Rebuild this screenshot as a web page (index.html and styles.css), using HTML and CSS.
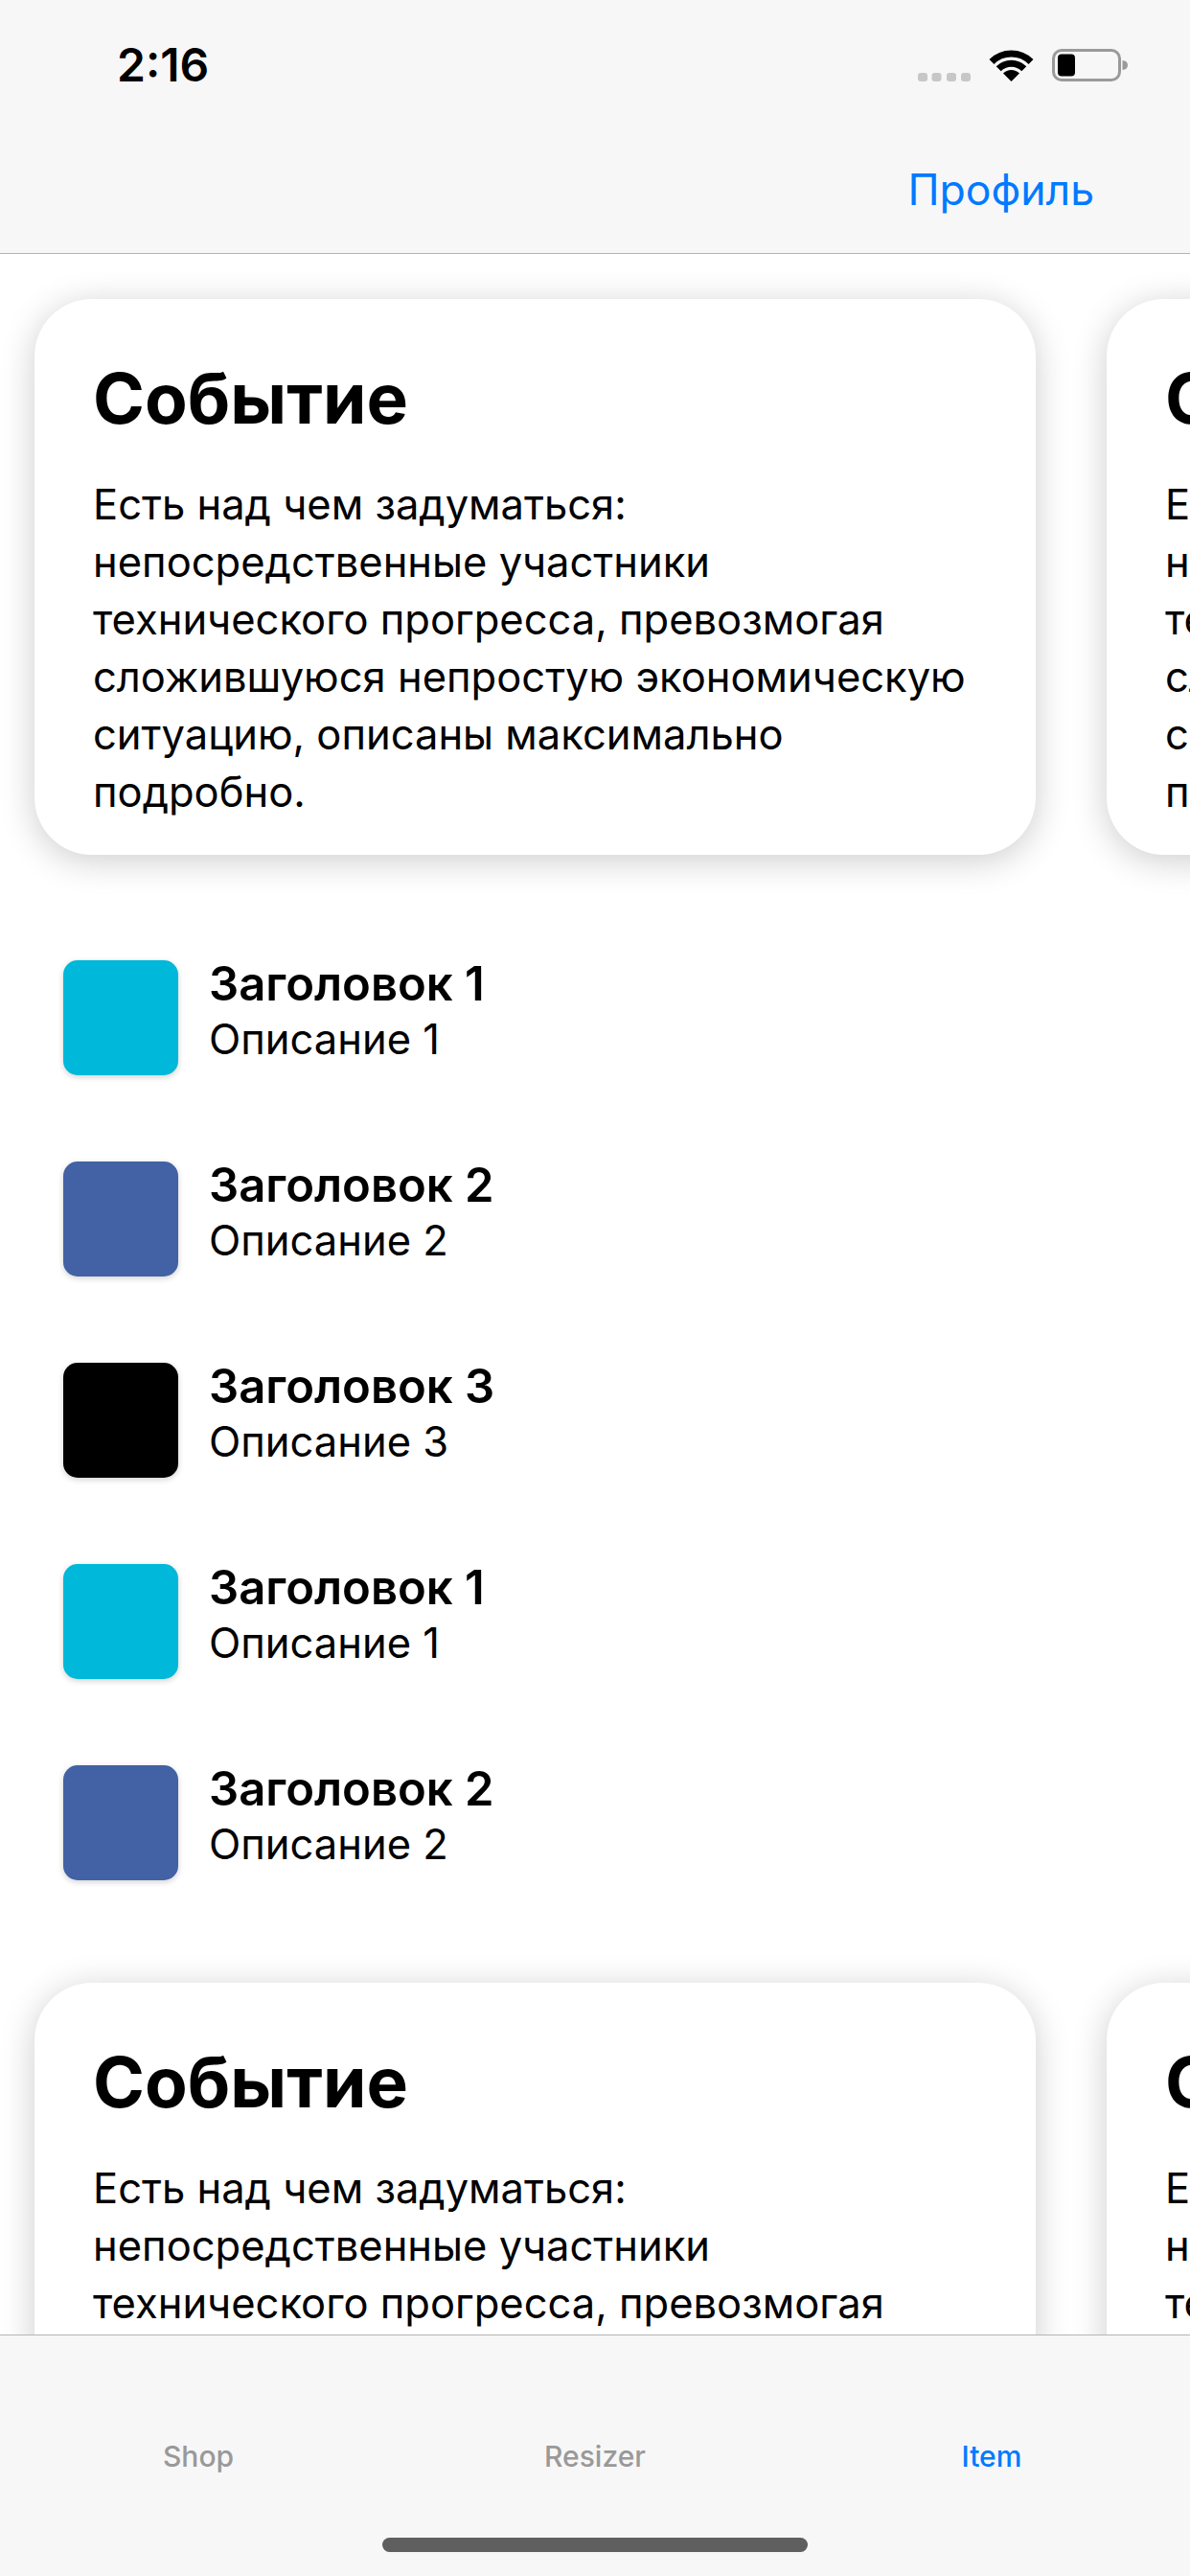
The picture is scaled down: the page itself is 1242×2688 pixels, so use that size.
FILE: index.html
```html
<!DOCTYPE html>
<html lang="ru">
<head>
<meta charset="utf-8">
<title>Item</title>
<link rel="stylesheet" href="styles.css">
</head>
<body>
<div class="screen">
  <header class="top">
    <div class="status">
      <span class="time">2:16</span>
      <svg class="status-icons" width="222" height="34" viewBox="0 0 222 34" aria-hidden="true">
        <g fill="#c7c7c7">
          <rect x="0" y="25" width="10" height="9" rx="3"/>
          <rect x="14.5" y="25" width="10" height="9" rx="3"/>
          <rect x="30" y="25" width="10" height="9" rx="3"/>
          <rect x="45" y="25" width="10" height="9" rx="3"/>
        </g>
        <g fill="none" stroke="#000" stroke-width="7">
          <path d="M77 13.5 A29 29 0 0 1 118 13.5"/>
          <path d="M84.2 20.7 A18.75 18.75 0 0 1 110.8 20.7"/>
        </g>
        <path d="M97.5 34 L89 25.5 A12 12 0 0 1 106 25.5 Z" fill="#000"/>
        <rect x="141.5" y="1.5" width="69" height="31" rx="8.5" fill="none" stroke="#9a9a9a" stroke-width="3"/>
        <rect x="146" y="5.5" width="18" height="23" rx="4" fill="#000"/>
        <path d="M213.5 12 Q219 12.5 219 17 Q219 21.5 213.5 22 Z" fill="#9a9a9a"/>
      </svg>
    </div>
    <nav class="navbar">
      <a class="nav-link">Профиль</a>
    </nav>
  </header>

  <main class="content">
    <section class="cards">
      <article class="card">
        <h2 class="card-title">Событие</h2>
        <p class="card-text">Есть над чем задуматься:<br>непосредственные участники<br>технического прогресса, превозмогая<br>сложившуюся непростую экономическую<br>ситуацию, описаны максимально<br>подробно.</p>
      </article>
      <article class="card">
        <h2 class="card-title">Событие</h2>
        <p class="card-text">Есть над чем задуматься:<br>непосредственные участники<br>технического прогресса, превозмогая<br>сложившуюся непростую экономическую<br>ситуацию, описаны максимально<br>подробно.</p>
      </article>
    </section>

    <ul class="list">
      <li class="row">
        <span class="swatch swatch-cyan"></span>
        <div class="row-text">
          <div class="row-title">Заголовок 1</div>
          <div class="row-sub">Описание 1</div>
        </div>
      </li>
      <li class="row">
        <span class="swatch swatch-blue"></span>
        <div class="row-text">
          <div class="row-title">Заголовок 2</div>
          <div class="row-sub">Описание 2</div>
        </div>
      </li>
      <li class="row">
        <span class="swatch swatch-black"></span>
        <div class="row-text">
          <div class="row-title">Заголовок 3</div>
          <div class="row-sub">Описание 3</div>
        </div>
      </li>
      <li class="row">
        <span class="swatch swatch-cyan"></span>
        <div class="row-text">
          <div class="row-title">Заголовок 1</div>
          <div class="row-sub">Описание 1</div>
        </div>
      </li>
      <li class="row">
        <span class="swatch swatch-blue"></span>
        <div class="row-text">
          <div class="row-title">Заголовок 2</div>
          <div class="row-sub">Описание 2</div>
        </div>
      </li>
    </ul>

    <section class="cards">
      <article class="card">
        <h2 class="card-title">Событие</h2>
        <p class="card-text">Есть над чем задуматься:<br>непосредственные участники<br>технического прогресса, превозмогая<br>сложившуюся непростую экономическую<br>ситуацию, описаны максимально<br>подробно.</p>
      </article>
      <article class="card">
        <h2 class="card-title">Событие</h2>
        <p class="card-text">Есть над чем задуматься:<br>непосредственные участники<br>технического прогресса, превозмогая<br>сложившуюся непростую экономическую<br>ситуацию, описаны максимально<br>подробно.</p>
      </article>
    </section>
  </main>

  <footer class="tabbar">
    <div class="tabs">
      <span class="tab">Shop</span>
      <span class="tab">Resizer</span>
      <span class="tab tab-active">Item</span>
    </div>
    <div class="home-indicator"></div>
  </footer>
</div>
</body>
</html>
```

FILE: styles.css
```css
* {
  box-sizing: border-box;
  margin: 0;
  padding: 0;
}

html, body {
  width: 1242px;
  height: 2688px;
  overflow: hidden;
  background: #ffffff;
  font-family: Inter, "Noto Sans", "Liberation Sans", sans-serif;
  color: #000;
}

.screen {
  width: 1242px;
  height: 2688px;
  display: flex;
  flex-direction: column;
  overflow: hidden;
}

/* header */
.top {
  flex: 0 0 auto;
  background: #f7f7f7;
  border-bottom: 1px solid #b4b4b4;
}

.status {
  height: 135px;
  display: flex;
  align-items: center;
  justify-content: space-between;
  padding: 0 62px 0 122px;
}

.time {
  font-size: 48px;
  line-height: 48px;
  font-weight: 600;
}

.status-icons {
  display: block;
}

.navbar {
  height: 129px;
  display: flex;
  justify-content: flex-end;
  align-items: flex-start;
  padding: 37px 100px 0 0;
}

.nav-link {
  font-size: 44.5px;
  line-height: 52px;
  color: #007aff;
}

/* content */
.content {
  flex: 1 1 auto;
  min-height: 0;
  overflow: hidden;
  padding-top: 47px;
}

.cards {
  display: flex;
  gap: 74px;
  padding-left: 36px;
}

.card {
  flex: 0 0 1045px;
  height: 580px;
  background: #fff;
  border-radius: 60px;
  box-shadow: 0 6px 36px rgba(0, 0, 0, 0.2);
  padding: 60px 61px 0;
}

.card-title {
  font-size: 73px;
  line-height: 88px;
  font-weight: 700;
}

.card-text {
  margin-top: 36px;
  font-size: 43.5px;
  line-height: 60px;
  white-space: nowrap;
}

.list {
  list-style: none;
  margin: 110px 0 107px;
  padding-left: 66px;
  display: flex;
  flex-direction: column;
  gap: 90px;
}

.row {
  display: flex;
  gap: 32px;
  height: 120px;
}

.swatch {
  flex: 0 0 120px;
  width: 120px;
  height: 120px;
  border-radius: 15px;
  box-shadow: 0 2px 6px rgba(0, 0, 0, 0.18);
}

.swatch-cyan { background: #00b8d9; }
.swatch-blue { background: #4262a5; }
.swatch-black { background: #000000; }

.row-text {
  margin-top: -4px;
}

.row-title {
  font-size: 49px;
  line-height: 58px;
  font-weight: 600;
}

.row-sub {
  margin-top: 3px;
  font-size: 43.5px;
  line-height: 50px;
}

/* tab bar */
.tabbar {
  flex: 0 0 252px;
  height: 252px;
  background: #f7f7f7;
  border-top: 1px solid #b4b4b4;
}

.tabs {
  display: grid;
  grid-template-columns: repeat(3, 1fr);
  padding-top: 108px;
  text-align: center;
}

.tab {
  font-size: 30px;
  line-height: 36px;
  font-weight: 500;
  color: #999999;
}

.tab-active {
  color: #007aff;
}

.home-indicator {
  width: 444px;
  height: 15px;
  border-radius: 8px;
  background: #5f5f5f;
  margin: 67px auto 0;
}
```
